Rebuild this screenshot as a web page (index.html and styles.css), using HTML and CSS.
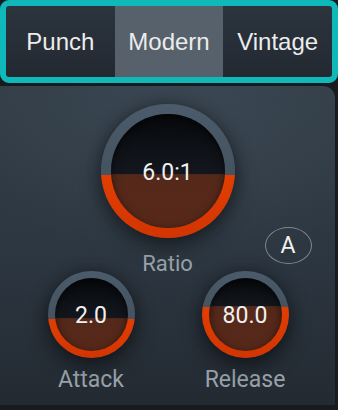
FILE: index.html
```html
<!DOCTYPE html>
<html lang="en">
<head>
    <meta charset="UTF-8">
    <meta name="viewport" content="width=device-width, initial-scale=1.0">
    <title>Compressor</title>
    <link rel="stylesheet" href="styles.css">
</head>
<body>
    <div class="modes">
        <div class="mode">Punch</div>
        <div class="mode active">Modern</div>
        <div class="mode">Vintage</div>
    </div>
    <div class="panel">
        <div class="top-row">
            <div class="knob big" style="--split: 71px">
                <div class="knob-face"><span class="value">6.0:1</span></div>
            </div>
            <div class="label ratio-label">Ratio</div>
            <div class="auto-btn">A</div>
        </div>
        <div class="bottom-row">
            <div class="cell">
                <div class="knob small" style="--split: 48px">
                    <div class="knob-face"><span class="value">2.0</span></div>
                </div>
                <div class="label">Attack</div>
            </div>
            <div class="cell">
                <div class="knob small" style="--split: 36px">
                    <div class="knob-face"><span class="value">80.0</span></div>
                </div>
                <div class="label">Release</div>
            </div>
        </div>
    </div>
</body>
</html>
```

FILE: styles.css
```css
body {
    margin: 0;
    padding: 0;
    width: 338px;
    height: 410px;
    overflow: hidden;
    background: #171b20;
    font-family: 'Roboto', 'Liberation Sans', sans-serif;
}
.modes {
    display: flex;
    height: 71px;
    border: 6px solid #0fb8b9;
    border-radius: 9px;
    overflow: hidden;
    background: linear-gradient(180deg, #2c343e, #222931);
}
.mode {
    flex: 1;
    display: flex;
    align-items: center;
    justify-content: center;
    font-family: 'Liberation Sans', Arial, sans-serif;
    font-size: 24px;
    color: #ececec;
    padding-top: 1px;
}
.mode.active {
    background: #56616b;
}
.panel {
    margin-top: 3px;
    width: 335px;
    height: 319px;
    box-sizing: border-box;
    padding-top: 18px;
    border-radius: 0 12px 0 0;
    background:
        radial-gradient(ellipse 70% 45% at 55% 10%, rgba(70, 84, 97, 0.45), rgba(70, 84, 97, 0) 100%),
        linear-gradient(180deg, #323d47 0%, #2c3640 55%, #232a32 100%);
}
.top-row {
    display: grid;
    grid-template-columns: 1fr 134px 1fr;
    grid-template-rows: 134px auto;
}
.top-row .knob {
    grid-column: 2;
    grid-row: 1;
}
.ratio-label {
    grid-column: 2;
    grid-row: 2;
    margin-top: 16px;
}
.auto-btn {
    grid-column: 3;
    grid-row: 1 / 3;
    align-self: end;
    justify-self: start;
    margin-left: 30px;
    margin-bottom: 10px;
    width: 45px;
    height: 35px;
    border: 1.5px solid #7d878f;
    border-radius: 50%;
    display: flex;
    align-items: center;
    justify-content: center;
    color: #f2f2f2;
    font-size: 23px;
}
.label {
    text-align: center;
    font-size: 22px;
    line-height: 20px;
    color: #9aa3ab;
    white-space: nowrap;
}
.bottom-row {
    display: flex;
    gap: 54px;
    padding-left: 41px;
    margin-top: -3px;
}
.cell {
    width: 100px;
    display: flex;
    flex-direction: column;
    align-items: center;
}
.cell .label {
    margin-top: 12px;
    font-size: 23px;
}
.knob {
    position: relative;
    border-radius: 50%;
    box-sizing: border-box;
    background: linear-gradient(180deg, #4b5b6b 0, #44535f var(--split), #e23e02 var(--split), #d23502 100%);
    box-shadow: 0 8px 22px rgba(0, 0, 0, 0.45), 0 0 14px rgba(0, 0, 0, 0.25);
}
.knob.big {
    width: 134px;
    height: 134px;
    padding: 10px;
    --ring: 10px;
}
.knob.small {
    width: 87px;
    height: 87px;
    padding: 7px;
    --ring: 7px;
}
.knob-face {
    width: 100%;
    height: 100%;
    border-radius: 50%;
    display: flex;
    align-items: center;
    justify-content: center;
    background: linear-gradient(180deg, #07090c 0, #13171d calc(var(--split) - var(--ring) - 1px), #3b2a24 calc(var(--split) - var(--ring) - 1px), #55291a calc(var(--split) - var(--ring)), #56281a 100%);
    box-shadow: inset 0 3px 8px rgba(0, 0, 0, 0.6);
}
.value {
    font-size: 23px;
    color: #f0f0f0;
    position: relative;
    top: 1px;
}
.knob.small .value {
    font-size: 23px;
}
```
